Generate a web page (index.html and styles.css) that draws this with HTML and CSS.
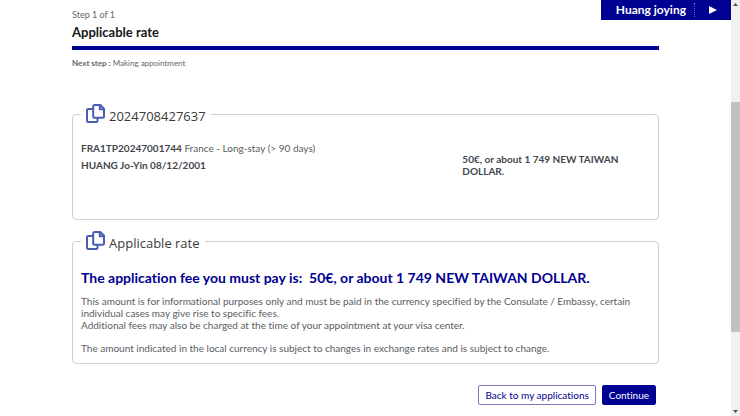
FILE: index.html
```html
<!DOCTYPE html>
<html lang="en">
<head>
  <meta charset="UTF-8" />
  <meta name="viewport" content="width=device-width, initial-scale=1.0" />
  <title>Applicable rate</title>
  <link rel="stylesheet" href="styles.css">
</head>
<body>
  <div class="window">
    <main class="page">
      <header class="step-header">
        <p class="step-count">Step 1 of 1</p>
        <h1>Applicable rate</h1>
        <div class="step-bar"></div>
        <p class="next-step"><strong>Next step :</strong> Making appointment</p>
      </header>

      <form class="rate-form">
        <fieldset class="panel application">
          <legend>
            <svg class="copy-icon" viewBox="0 0 19 19" aria-hidden="true">
              <path d="M8.5 1h5.8L18 4.700v7.800a1.300 1.300 0 0 1-1.300 1.300H8.500a1.300 1.300 0 0 1-1.300-1.300V2.300A1.300 1.300 0 0 1 8.500 1z" />
              <path d="M13.800 1v4.200H18" />
              <path d="M7 5H2.300A1.300 1.300 0 0 0 1 6.300v10.400A1.300 1.300 0 0 0 2.300 18h7.900a1.300 1.300 0 0 0 1.300-1.300V14" />
            </svg>
            <span>2024708427637</span>
          </legend>
          <div class="application-row">
            <div class="applicant">
              <p><strong>FRA1TP20247001744</strong> France - Long-stay (&gt; 90 days)</p>
              <p><strong>HUANG Jo-Yin 08/12/2001</strong></p>
            </div>
            <p class="fee">50€, or about 1 749 NEW TAIWAN DOLLAR.</p>
          </div>
        </fieldset>

        <fieldset class="panel rate">
          <legend>
            <svg class="copy-icon" viewBox="0 0 19 19" aria-hidden="true">
              <path d="M8.5 1h5.8L18 4.700v7.800a1.300 1.300 0 0 1-1.300 1.300H8.500a1.300 1.300 0 0 1-1.300-1.300V2.300A1.300 1.300 0 0 1 8.500 1z" />
              <path d="M13.800 1v4.200H18" />
              <path d="M7 5H2.300A1.300 1.300 0 0 0 1 6.300v10.400A1.300 1.300 0 0 0 2.300 18h7.900a1.300 1.300 0 0 0 1.300-1.300V14" />
            </svg>
            <span>Applicable rate</span>
          </legend>
          <h2>The application fee you must pay is:&nbsp; 50€, or about 1 749 NEW TAIWAN DOLLAR.</h2>
          <p>This amount is for informational purposes only and must be paid in the currency specified by the Consulate / Embassy, certain individual cases may give rise to specific fees.</p>
          <p>Additional fees may also be charged at the time of your appointment at your visa center.</p>
          <p class="rate-note">The amount indicated in the local currency is subject to changes in exchange rates and is subject to change.</p>
        </fieldset>

        <div class="actions">
          <button type="button" class="btn btn-outline">Back to my applications</button>
          <button type="submit" class="btn">Continue</button>
        </div>
      </form>

      <button type="button" class="user-tab">
        <span class="user-name">Huang joying</span>
        <svg class="user-arrow" viewBox="0 0 8 8" aria-hidden="true"><path d="M0 0l8 4-8 4z" /></svg>
      </button>
    </main>

    <div class="scroll-track" aria-hidden="true">
      <svg class="scroll-arrow" viewBox="0 0 5 3"><path d="M0 3l2.500-3L5 3z" /></svg>
      <div class="scroll-thumb"></div>
      <svg class="scroll-arrow" viewBox="0 0 5 3"><path d="M0 0l2.500 3L5 0z" /></svg>
    </div>
  </div>
</body>
</html>
```
FILE: styles.css
```css
:root {
  --blue: #000091;
  --text: #5a5d61;
  --strong: #43474c;
  --border: #cfcfcf;
}
* {
  box-sizing: border-box;
}
body {
  margin: 0;
  font-family: Lato, "Open Sans", sans-serif;
  font-size: 10px;
  line-height: 12px;
  font-variant-ligatures: none;
  color: var(--text);
  background-color: #fff;
}
h1, h2, p {
  margin: 0;
}
.window {
  display: flex;
  height: 100vh;
}
.page {
  position: relative;
  flex: 1;
  padding: 8px 72px 0;
}

/* Stepper */
.step-count {
  font-size: 9px;
  line-height: 14px;
  color: #666;
}
h1 {
  font-size: 13px;
  line-height: 20px;
  color: #161616;
}
.step-bar {
  height: 4px;
  margin: 4px 0 7px;
  background-color: var(--blue);
}
.next-step {
  font-size: 8px;
  color: #666;
}

/* Panels */
.panel {
  min-width: 0;
  margin: 0;
  padding: 0 8px;
  border: 1px solid var(--border);
  border-radius: 4px;
}
.panel legend {
  display: flex;
  align-items: flex-start;
  gap: 4px;
  padding: 1px 5px 0;
  font-family: "Open Sans", "Noto Sans", sans-serif;
  font-size: 13px;
  line-height: 20px;
  color: #3a3a3a;
}
.panel legend span {
  padding-top: 2px;
}
.copy-icon {
  width: 19px;
  height: 19px;
  fill: none;
  stroke: #4a5eb0;
  stroke-width: 2;
}
.application {
  margin-top: 34px;
  min-height: 117px;
}
.application-row {
  display: grid;
  grid-template-columns: 2fr 1fr;
  column-gap: 6px;
  padding-top: 14px;
}
.applicant {
  line-height: 17px;
}
.applicant strong,
.fee {
  color: var(--strong);
}
.fee {
  padding-top: 13px;
  font-weight: bold;
}
.rate {
  margin-top: 10px;
  padding-bottom: 9px;
}
.rate h2 {
  margin: 16px 0 8px;
  font-size: 14px;
  line-height: 18px;
  color: var(--blue);
}
.rate .rate-note {
  margin-top: 11px;
}

/* Buttons */
.actions {
  display: flex;
  justify-content: flex-end;
  gap: 6px;
  margin-top: 21px;
  padding-right: 3px;
}
.btn {
  height: 20px;
  padding: 0 6px;
  border: 1px solid var(--blue);
  border-radius: 2px;
  font: 10px/18px Lato, "Open Sans", sans-serif;
  font-variant-ligatures: none;
  color: #fff;
  background-color: var(--blue);
  cursor: pointer;
}
.btn-outline {
  border-color: #7a7ac4;
  color: var(--blue);
  background-color: #fff;
}
.user-tab {
  position: absolute;
  top: 0;
  right: 0;
  display: flex;
  align-items: center;
  height: 20px;
  padding: 0 14px 0 15px;
  border: 0;
  font: bold 12px/20px Lato, sans-serif;
  color: #fff;
  background-color: var(--blue);
  cursor: pointer;
}
.user-name {
  padding-right: 8px;
  border-right: 1px dotted #6a6ac0;
  line-height: 14px;
}
.user-arrow {
  width: 8px;
  height: 8px;
  margin-left: 14px;
  fill: #fff;
}

/* Scrollbar */
.scroll-track {
  display: flex;
  flex-direction: column;
  align-items: center;
  width: 9px;
  padding: 3px 0;
  background-color: #f1f1f1;
}
.scroll-arrow {
  width: 5px;
  height: 3px;
  fill: #505050;
}
.scroll-thumb {
  width: 9px;
  height: 56%;
  margin: 96px 0 auto;
  background-color: #c1c1c1;
}
```
